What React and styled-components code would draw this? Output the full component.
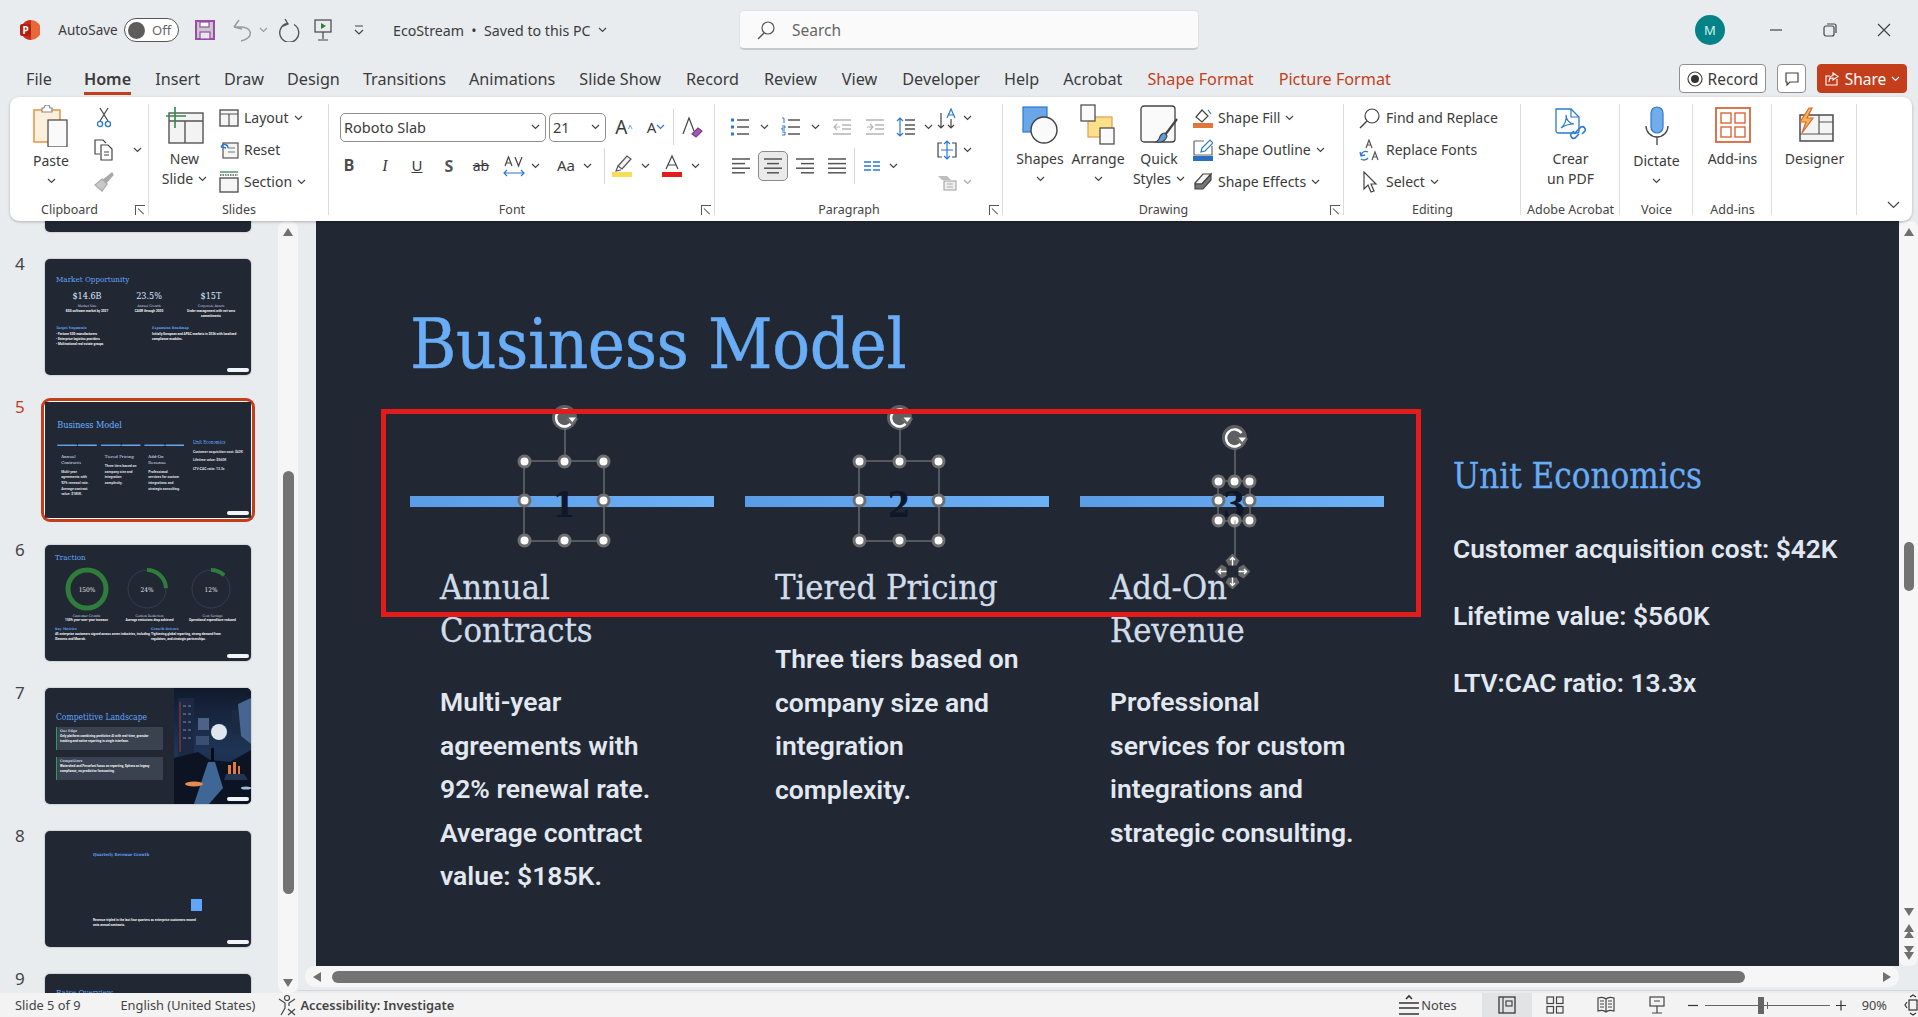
import React from "react";
import styled, { createGlobalStyle } from "styled-components";

const UI = `"Noto Sans", "Open Sans", sans-serif`;
const SLAB = `"DejaVu Serif Condensed", "DejaVu Serif", serif`;
const INK = "#3b3b3b";
const ACCENT = "#c43e1c";
const SLIDE = "#212733";
const BLUE = "#68adf6";

const Global = createGlobalStyle`
  html, body { margin: 0; padding: 0; background: #e9ecef; }
  body { font-family: ${UI}; color: ${INK}; overflow: hidden; }
  * { box-sizing: border-box; }
`;

const Page = styled.div`
  width: 1918px;
  height: 1017px;
  display: flex;
  flex-direction: column;
  background: #e9ecef;
  overflow: hidden;
`;

/* ---------- small drawing helpers ---------- */
const SvgBase = styled.svg`
  display: block;
  flex: none;
`;

const Ic = ({ w = 20, h = 20, children }) => (
  <SvgBase width={w} height={h} viewBox={`0 0 ${w} ${h}`} fill="none" stroke="#444" strokeWidth="1.2">
    {children}
  </SvgBase>
);

const Chev = ({ c = "#444" }) => (
  <SvgBase width="9" height="6" viewBox="0 0 9 6" fill="none" stroke={c} strokeWidth="1.2">
    <path d="M1 1l3.5 3.5L8 1" />
  </SvgBase>
);

const Launcher = styled.span`
  position: absolute;
  right: 4px;
  bottom: 6px;
  width: 10px;
  height: 10px;
  border-left: 1px solid #555;
  border-top: 1px solid #555;
  &::after {
    content: "";
    position: absolute;
    left: 2px;
    top: 2px;
    width: 8px;
    height: 1px;
    background: #555;
    transform: rotate(45deg);
    transform-origin: left;
  }
`;

/* ---------- title bar ---------- */
const TitleBar = styled.div`
  height: 60px;
  display: flex;
  align-items: center;
  padding-left: 20px;
  font-size: 13.5px;
`;

const Cell = styled.div`
  width: ${(p) => (p.$w ? `${p.$w}px` : "auto")};
  margin-left: ${(p) => p.$ml || 0}px;
  flex: none;
  display: flex;
  align-items: center;
  justify-content: ${(p) => p.$j || "center"};
`;

const Toggle = styled.div`
  width: 55px;
  height: 24px;
  border: 1px solid #555;
  border-radius: 12px;
  background: #fff;
  display: flex;
  align-items: center;
  padding-left: 3px;
  gap: 7px;
  font-size: 13px;
  color: #666;
`;

const Knob = styled.span`
  width: 17px;
  height: 17px;
  border-radius: 50%;
  background: #5c5c5c;
`;

const DocName = styled.div`
  margin-left: 29px;
  width: 214px;
  display: flex;
  align-items: center;
  justify-content: space-between;
  font-size: 14.2px;
  white-space: nowrap;
`;

const SearchBox = styled.div`
  margin-left: 132px;
  width: 460px;
  height: 40px;
  background: #fafafa;
  border-radius: 5px;
  border: 1px solid #dfe1e3;
  border-bottom: 2px solid #c5c7ca;
  display: flex;
  align-items: center;
  padding-left: 16px;
  gap: 16px;
  font-size: 15.5px;
  color: #666;
`;

const Avatar = styled.div`
  margin-left: 496px;
  width: 30px;
  height: 30px;
  border-radius: 50%;
  background: #038387;
  color: #d7f0f0;
  font-size: 13px;
  display: flex;
  align-items: center;
  justify-content: center;
`;

const WinBtns = styled.div`
  margin-left: 44px;
  display: flex;
  gap: 40px;
`;

/* ---------- tabs ---------- */
const TabRow = styled.div`
  height: 37px;
  display: flex;
  align-items: flex-start;
  padding: 4px 11px 0 26px;
  position: relative;
`;

const Tab = styled.div`
  height: 31px;
  margin-right: ${(p) => p.$mr}px;
  font-size: 16.2px;
  line-height: 31px;
  white-space: nowrap;
  color: ${(p) => (p.$ctx ? ACCENT : INK)};
  font-weight: ${(p) => (p.$on ? 600 : 400)};
  border-bottom: ${(p) => (p.$on ? `3px solid ${ACCENT}` : "0")};
`;

const TabRight = styled.div`
  margin-left: auto;
  display: flex;
  gap: 11px;
`;

const OutlineBtn = styled.div`
  height: 29px;
  width: ${(p) => p.$w}px;
  background: #fff;
  border: 1px solid #8f8f8f;
  border-radius: 4px;
  display: flex;
  align-items: center;
  justify-content: center;
  gap: 5px;
  font-size: 15.5px;
`;

const ShareBtn = styled(OutlineBtn)`
  background: ${ACCENT};
  border-color: ${ACCENT};
  color: #fff;
`;

/* ---------- ribbon ---------- */
const Ribbon = styled.div`
  height: 124px;
  margin: 0 6px 0 10px;
  background: #fff;
  border-radius: 9px;
  box-shadow: 0 1px 3px rgba(0, 0, 0, 0.25);
  display: flex;
  position: relative;
  z-index: 3;
  font-size: 14px;
`;

const Group = styled.section`
  width: ${(p) => p.$w}px;
  flex: none;
  position: relative;
  &::after {
    content: "";
    position: absolute;
    right: 0;
    top: 7px;
    bottom: 6px;
    width: 1px;
    background: #dcdcdc;
  }
`;

const GroupBody = styled.div`
  height: 104px;
  padding: 4.5px 0 0 ${(p) => p.$pl || 0}px;
  display: flex;
`;

const GroupLabel = styled.div`
  text-align: center;
  font-size: 12.5px;
  line-height: 18px;
  color: #444;
  white-space: nowrap;
  padding-right: ${(p) => (p.$launch ? 20 : 0)}px;
`;

const Big = styled.div`
  width: ${(p) => p.$w}px;
  margin-left: ${(p) => p.$ml || 0}px;
  flex: none;
  display: flex;
  flex-direction: column;
  align-items: center;
  line-height: 20px;
  white-space: nowrap;
`;

const BigIcon = styled.div`
  height: ${(p) => p.$h || 47}px;
  display: flex;
  align-items: center;
`;

const BigLine = styled.div`
  height: 20px;
  display: flex;
  align-items: center;
  gap: 5px;
`;

const Stack = styled.div`
  margin-left: ${(p) => p.$ml || 0}px;
  display: flex;
  flex-direction: column;
  flex: none;
`;

const SmallRow = styled.div`
  height: 32px;
  display: flex;
  align-items: center;
  gap: ${(p) => p.$gap ?? 5}px;
  white-space: nowrap;
`;

const Split = styled.div`
  display: flex;
  align-items: center;
  height: ${(p) => p.$h}px;
  padding-left: ${(p) => p.$pl || 0}px;
`;

const Combo = styled.div`
  width: ${(p) => p.$w}px;
  margin-left: ${(p) => p.$ml || 0}px;
  height: 29px;
  border: 1px solid #8e8e8e;
  border-radius: 5px;
  display: flex;
  align-items: center;
  justify-content: space-between;
  padding: 0 5px 0 3px;
  font-size: 14.5px;
`;

const Sep = styled.span`
  width: 1px;
  height: 36px;
  margin-left: ${(p) => p.$ml || 0}px;
  background: #d6d6d6;
  flex: none;
`;

const Glyph = styled.span`
  font-family: ${(p) => p.$font || UI};
  font-size: ${(p) => p.$s || 15}px;
  font-weight: ${(p) => p.$b || 400};
  font-style: ${(p) => (p.$i ? "italic" : "normal")};
  text-decoration: ${(p) => p.$d || "none"};
  color: ${(p) => p.$c || INK};
  line-height: 1;
`;

const Pressed = styled.div`
  width: 30px;
  height: 30px;
  margin-left: 7px;
  flex: none;
  border: 1px solid #8a8a8a;
  border-radius: 5px;
  background: #eaeaea;
  display: flex;
  align-items: center;
  justify-content: center;
`;

const CollapseBtn = styled.div`
  position: absolute;
  right: 12px;
  bottom: 12px;
`;

/* lines icon used by paragraph buttons */
const Lines = ({ rows, c = "#555" }) => (
  <Ic w={20} h={20}>
    {rows.map(([x1, x2], i) => (
      <path key={i} d={`M${x1} ${3 + i * 4.6}H${x2}`} stroke={c} strokeWidth="1.5" />
    ))}
  </Ic>
);

/* ---------- workspace ---------- */
const Workspace = styled.div`
  height: 772px;
  display: flex;
  overflow: hidden;
`;

const Sidebar = styled.div`
  width: 278px;
  flex: none;
  overflow: hidden;
  display: flex;
  flex-direction: column;
  gap: 27px;
`;

const ThumbRow = styled.div`
  display: flex;
  flex: none;
  padding-left: 15px;
`;

const ThumbNo = styled.div`
  width: 30px;
  font-size: 17px;
  line-height: 22px;
  margin-top: -6px;
  color: ${(p) => (p.$on ? ACCENT : "#444")};
`;

const Thumb = styled.div`
  width: 206px;
  height: ${(p) => p.$h || 116}px;
  background: ${SLIDE};
  border-radius: ${(p) => p.$r || "5px"};
  position: relative;
  overflow: ${(p) => (p.$on ? "visible" : "hidden")};
  flex: none;
  color: #dfe6ee;
  box-shadow: ${(p) =>
    p.$on ? `0 0 0 1px #fff, 0 0 0 4px ${ACCENT}` : "0 0 2px rgba(0,0,0,.35)"};
`;

const Badge = styled.span`
  position: absolute;
  right: 2px;
  bottom: 3px;
  width: 22px;
  height: 4px;
  border-radius: 2px;
  background: #f2f5f8;
`;

const MiniTitle = styled.div`
  font-family: ${SLAB};
  font-size: ${(p) => p.$s || 8}px;
  line-height: 1.2;
  color: #60a5fa;
  white-space: nowrap;
`;

const MiniPad = styled.div`
  padding: ${(p) => p.$p};
  height: 100%;
  overflow: hidden;
`;

const MiniStats = styled.div`
  display: grid;
  grid-template-columns: 62px 62px 62px;
  margin-top: 6px;
  text-align: center;
`;

const MiniBig = styled.div`
  font-family: ${SLAB};
  font-size: 9px;
  color: #dbeafe;
`;

const MiniCap = styled.div`
  font-family: ${SLAB};
  font-size: 3.4px;
  color: #cbd5e1;
  margin-top: ${(p) => p.$mt || 3}px;
`;

const MiniText = styled.div`
  font-family: Roboto, sans-serif;
  font-weight: 700;
  font-size: 3.2px;
  line-height: 5px;
  color: #f1f5f9;
  margin-top: ${(p) => p.$mt || 0}px;
`;

const MiniHead = styled.div`
  font-family: ${SLAB};
  font-size: ${(p) => p.$s || 3.6}px;
  font-weight: 700;
  line-height: 5px;
  color: ${(p) => p.$c || "#60a5fa"};
`;

const MiniCols = styled.div`
  display: grid;
  grid-template-columns: ${(p) => p.$c || "96px 86px"};
  margin-top: ${(p) => p.$mt || 0}px;
`;

const DonutRow = styled.div`
  display: grid;
  grid-template-columns: 63px 63px 63px;
  margin-top: 4px;
  text-align: center;
  justify-items: center;
`;

const EdgeBox = styled.div`
  margin-top: ${(p) => p.$mt}px;
  width: 107px;
  height: 23px;
  background: #3a424f;
  border-left: 1px solid #2e9e4f;
  padding: 2px 3px;
`;

const ThumbArt = styled.div`
  position: absolute;
  right: 0;
  top: 0;
  bottom: 0;
  width: 77px;
`;

const ChartBlock = styled.div`
  margin: 42px 0 0 98px;
  width: 11px;
  height: 12px;
  background: #60a5fa;
`;

const ChartNote = styled(MiniText)`
  margin-top: 7px;
  width: 108px;
`;

const ChartWrap = styled.div`
  padding-left: 48px;
  padding-top: 21px;
`;

const Scaled = styled.div`
  width: 1583px;
  height: 890px;
  transform: scale(0.1301);
  transform-origin: 0 0;
`;

/* vertical scroll strip */
const VScroll = styled.div`
  width: ${(p) => p.$w}px;
  flex: none;
  background: #f6f6f6;
  border-radius: 8px;
  display: flex;
  flex-direction: column;
  align-items: center;
  padding: 6px 0 5px;
`;

const VThumb = styled.div`
  width: ${(p) => p.$tw}px;
  height: ${(p) => p.$h}px;
  margin-top: ${(p) => p.$mt}px;
  margin-bottom: auto;
  background: #737373;
  border-radius: 6px;
`;

const ArrowStack = styled.div`
  display: flex;
  flex-direction: column;
  align-items: center;
  gap: 6px;
`;

const Arrow = ({ dir = "up", dbl }) => {
  const t = { up: 0, right: 90, down: 180, left: 270 }[dir];
  return (
    <SvgBase width="12" height={dbl ? 16 : 10} viewBox={dbl ? "0 0 12 16" : "0 0 12 10"} style={{ transform: `rotate(${t}deg)` }} fill="#707070">
      <path d="M6 1l5 8H1z" />
      {dbl && <path d="M6 8l5 7H1z" />}
    </SvgBase>
  );
};

const Center = styled.div`
  flex: 1;
  display: flex;
  flex-direction: column;
  min-width: 0;
`;

const CanvasRow = styled.div`
  height: 745px;
  display: flex;
  padding-left: 18px;
`;

const Viewport = styled.div`
  width: 1583px;
  height: 745px;
  overflow: hidden;
  position: relative;
`;

const ViewportInner = styled.div`
  margin-top: -52px;
`;

const HScroll = styled.div`
  margin-left: 7px;
  width: 1594px;
  height: 21px;
  background: #f6f6f6;
  border-radius: 10px;
  display: flex;
  align-items: center;
  padding: 0 6px;
`;

const HThumb = styled.div`
  width: 1413px;
  height: 12px;
  margin-left: 9px;
  margin-right: auto;
  background: #737373;
  border-radius: 6px;
`;

const HRule = styled.div`
  margin-top: 3px;
  height: 1px;
  background: #d4d6d9;
`;

/* ---------- the slide ---------- */
const SlideFrame = styled.div`
  width: 1583px;
  height: 890px;
  background: ${SLIDE};
  position: relative;
  padding: 123px 0 0 94px;
`;

const SlideTitle = styled.h1`
  margin: 0;
  height: 104px;
  font-family: ${SLAB};
  font-weight: 400;
  font-size: 70px;
  line-height: 104px;
  letter-spacing: -0.4px;
  -webkit-text-stroke: 0.5px ${BLUE};
  color: ${BLUE};
`;

const Columns = styled.div`
  margin-top: 59px;
  display: flex;
  gap: 31px;
`;

const PlanCol = styled.div`
  width: 304px;
  flex: none;
  padding-top: 41px;
`;

const Bar = styled.div`
  height: 11px;
  position: relative;
  background: linear-gradient(90deg, #5a9ce6, #6cb0f6);
`;

const Digit = styled.span`
  position: absolute;
  left: calc(50% + 2px);
  top: 50%;
  transform: translate(-50%, -44%);
  font-family: ${SLAB};
  font-weight: 700;
  font-size: 36px;
  line-height: 1;
  color: #0f172a;
`;

const PlanHead = styled.h3`
  margin: 59px 0 0;
  padding-left: 30px;
  width: 290px;
  font-family: ${SLAB};
  font-weight: 400;
  font-size: 34.2px;
  line-height: 43px;
  -webkit-text-stroke: 0.3px #d0dde9;
  color: #d0dde9;
`;

const PlanText = styled.p`
  margin: 28px 0 0;
  padding-left: 30px;
  width: 282px;
  font-family: Roboto, sans-serif;
  font-weight: 600;
  font-size: 26.5px;
  line-height: 43.6px;
  color: #e2e8f0;
`;

const EconCol = styled.div`
  margin-left: 38px;
  flex: none;
`;

const EconHead = styled.h2`
  margin: 0;
  font-family: ${SLAB};
  font-weight: 400;
  font-size: 34.6px;
  line-height: 42px;
  -webkit-text-stroke: 0.3px ${BLUE};
  color: ${BLUE};
`;

const EconItem = styled.div`
  margin-top: ${(p) => p.$mt}px;
  font-family: Roboto, sans-serif;
  font-weight: 600;
  font-size: 26.3px;
  line-height: 40px;
  color: #e2e8f0;
  white-space: nowrap;
`;

/* selection overlay on the number shapes */
const SelBox = styled.div`
  position: absolute;
  left: calc(50% + 2px);
  top: calc(50% - 1px);
  width: ${(p) => p.$w}px;
  height: ${(p) => p.$h}px;
  transform: translate(-50%, -50%);
  border: 1px solid #8a8a8a;
`;

const Handle = styled.span`
  position: absolute;
  left: ${(p) => p.$x}%;
  top: ${(p) => p.$y}%;
  width: 14px;
  height: 14px;
  margin: -7px 0 0 -7px;
  border-radius: 50%;
  background: #fff;
  border: 3px solid #6e6e6e;
`;

const Stem = styled.span`
  position: absolute;
  left: 50%;
  width: 1px;
  background: #8a8a8a;
  ${(p) => (p.$down ? `top: 100%; height: 36px;` : `bottom: 100%; height: 34px;`)}
`;

const RotateMark = styled.span`
  position: absolute;
  left: 50%;
  bottom: 100%;
  margin: 0 0 30px -13px;
`;

const MoveMark = styled.span`
  position: absolute;
  left: 50%;
  top: 100%;
  margin: 33px 0 0 -20px;
`;

const Callout = styled.div`
  position: absolute;
  left: 65px;
  top: 240px;
  width: 1040px;
  height: 208px;
  border: 5px solid #e31b1b;
  pointer-events: none;
`;

const Rotate = () => (
  <SvgBase width="32" height="28" viewBox="0 0 32 28" fill="none">
    <circle cx="13" cy="14" r="12.500" fill="#6e6e6e" opacity=".8" />
    <path d="M20 9.500a8.500 8.500 0 1 0 1 8" stroke="#fff" strokeWidth="2.4" />
    <path d="M14 15h13l-6.500 7z" fill="#6e6e6e" />
    <path d="M17 14h7.500l-3.700 4.500z" fill="#fff" />
  </SvgBase>
);

const Move = () => (
  <SvgBase width="36" height="36" viewBox="0 0 36 36">
    <path d="M18 0l7 7-3 5h-8l-3-5zM18 36l7-7-3-5h-8l-3 5zM0 18l7-7 5 3v8l-5 3zM36 18l-7-7-5 3v8l5 3z" fill="#686868" />
    <path d="M18 4v8M15.500 6.500L18 4l2.500 2.500M18 32v-8M15.500 29.500L18 32l2.500-2.500M4 18h8M6.500 15.500L4 18l2.500 2.500M32 18h-8M29.500 15.500L32 18l-2.500 2.500" stroke="#fff" strokeWidth="1.4" fill="none" />
  </SvgBase>
);

const Selection = ({ w, h, n, extra }) => (
  <>
    <Digit>{n}</Digit>
    <SelBox $w={w} $h={h}>
      <Stem />
      <RotateMark>
        <Rotate />
      </RotateMark>
      {[0, 50, 100].map((y) =>
        [0, 50, 100].map((x) =>
          x === 50 && y === 50 ? null : <Handle key={`${x}-${y}`} $x={x} $y={y} />
        )
      )}
      {extra && (
        <>
          <Stem $down />
          <MoveMark>
            <Move />
          </MoveMark>
        </>
      )}
    </SelBox>
  </>
);

const plans = [
  {
    n: 1,
    w: 81,
    h: 81,
    head: "Annual Contracts",
    text: "Multi-year agreements with 92% renewal rate. Average contract value: $185K.",
  },
  {
    n: 2,
    w: 81,
    h: 81,
    head: "Tiered Pricing",
    text: "Three tiers based on company size and integration complexity.",
  },
  {
    n: 3,
    w: 33,
    h: 41,
    extra: true,
    head: "Add-On Revenue",
    text: "Professional services for custom integrations and strategic consulting.",
  },
];

const BusinessSlide = ({ selected }) => (
  <SlideFrame>
    <SlideTitle>Business Model</SlideTitle>
    <Columns>
      {plans.map((p) => (
        <PlanCol key={p.n}>
          <Bar>
            {selected ? <Selection {...p} /> : <Digit>{p.n}</Digit>}
          </Bar>
          <PlanHead>{p.head}</PlanHead>
          <PlanText>{p.text}</PlanText>
        </PlanCol>
      ))}
      <EconCol>
        <EconHead>Unit Economics</EconHead>
        <EconItem $mt={32}>Customer acquisition cost: $42K</EconItem>
        <EconItem $mt={27}>Lifetime value: $560K</EconItem>
        <EconItem $mt={27}>LTV:CAC ratio: 13.3x</EconItem>
      </EconCol>
    </Columns>
    {selected && <Callout />}
  </SlideFrame>
);

/* ---------- thumbnails ---------- */
const Donut = ({ pct, thick, label }) => {
  const r = 19;
  const c = 2 * Math.PI * r;
  return (
    <SvgBase width="44" height="44" viewBox="0 0 44 44" fill="none">
      <circle cx="22" cy="22" r={r} stroke="#3a4454" strokeWidth="0.8" />
      <circle
        cx="22"
        cy="22"
        r={r}
        stroke="#2e7d3a"
        strokeWidth={thick}
        strokeDasharray={`${(c * pct) / 100} ${c}`}
        transform="rotate(-90 22 22)"
      />
      <text x="22" y="24.5" textAnchor="middle" fontSize="6.5" fill="#e2e8f0" fontFamily="DejaVu Serif Condensed, serif">
        {label}
      </text>
    </SvgBase>
  );
};

const CityArt = () => (
  <SvgBase width="77" height="116" viewBox="0 0 77 116">
    <defs>
      <linearGradient id="sky" x1="0" y1="0" x2="0" y2="1">
        <stop offset="0" stopColor="#111a2c" />
        <stop offset="0.55" stopColor="#1f3557" />
        <stop offset="1" stopColor="#0d1524" />
      </linearGradient>
    </defs>
    <rect width="77" height="116" fill="url(#sky)" />
    <path d="M4 10h16v62H4zM58 22h10v24H58z" fill="#1c2942" />
    <path d="M6 14v50" stroke="#a33a3a" strokeWidth="1" />
    <path d="M9 18h3M14 18h3M9 26h3M14 26h3M9 34h3M14 34h3M9 42h3M14 42h3M9 50h3M14 50h3" stroke="#7a8ba8" strokeWidth="1.2" />
    <path d="M64 16l13-6v46l-10-8z" fill="#47658e" />
    <circle cx="45" cy="44" r="8" fill="#dfe6ee" />
    <rect x="24" y="30" width="11" height="12" fill="#4c6286" />
    <rect x="22" y="48" width="13" height="9" fill="#3b4f73" />
    <path d="M0 70l24-6 12 8 20 2 21-12v54H0z" fill="#0c1424" />
    <path d="M34 74h7l8 26-14 16H20z" fill="#3f6796" />
    <path d="M37 60h3v13h-3z" fill="#070b14" />
    <path d="M54 86h3v-9h-3zM59 86h3V74h-3zM64 86h2v-8h-2z" fill="#e2793f" />
    <path d="M52 86h18l4 6H50z" fill="#223654" />
    <ellipse cx="20" cy="96" rx="9" ry="2.500" fill="#e98a4e" />
    <ellipse cx="72" cy="100" rx="5" ry="1.500" fill="#9cc1e0" />
  </SvgBase>
);

const T4 = () => (
  <MiniPad $p="16px 11px">
    <MiniTitle>Market Opportunity</MiniTitle>
    <MiniStats>
      <div>
        <MiniBig>$14.6B</MiniBig>
        <MiniCap>Market Size</MiniCap>
        <MiniText $mt={1}>ESG software market by 2027</MiniText>
      </div>
      <div>
        <MiniBig>23.5%</MiniBig>
        <MiniCap>Annual Growth</MiniCap>
        <MiniText $mt={1}>CAGR through 2030</MiniText>
      </div>
      <div>
        <MiniBig>$15T</MiniBig>
        <MiniCap>Corporate Assets</MiniCap>
        <MiniText $mt={1}>Under management with net-zero commitments</MiniText>
      </div>
    </MiniStats>
    <MiniCols $mt={7}>
      <div>
        <MiniHead>Target Segments</MiniHead>
        <MiniText $mt={1}>• Fortune 500 manufacturers</MiniText>
        <MiniText>• Enterprise logistics providers</MiniText>
        <MiniText>• Multinational real estate groups</MiniText>
      </div>
      <div>
        <MiniHead>Expansion Roadmap</MiniHead>
        <MiniText $mt={1}>Initially European and APAC markets in 2026 with localized compliance modules.</MiniText>
      </div>
    </MiniCols>
  </MiniPad>
);

const T6 = () => (
  <MiniPad $p="8px 10px">
    <MiniTitle>Traction</MiniTitle>
    <DonutRow>
      <div>
        <Donut pct={100} thick={5} label="150%" />
        <MiniCap>Customer Growth</MiniCap>
        <MiniText>150% year-over-year increase</MiniText>
      </div>
      <div>
        <Donut pct={24} thick={4} label="24%" />
        <MiniCap>Carbon Reduction</MiniCap>
        <MiniText>Average emissions drop achieved</MiniText>
      </div>
      <div>
        <Donut pct={12} thick={4} label="12%" />
        <MiniCap>Cost Savings</MiniCap>
        <MiniText>Operational expenditure reduced</MiniText>
      </div>
    </DonutRow>
    <MiniCols $mt={4}>
      <div>
        <MiniHead>Key Metrics</MiniHead>
        <MiniText>45 enterprise customers signed across seven industries, including Siemens and Maersk.</MiniText>
      </div>
      <div>
        <MiniHead>Growth Drivers</MiniHead>
        <MiniText>Tightening global reporting, strong demand from regulators, and strategic partnerships.</MiniText>
      </div>
    </MiniCols>
  </MiniPad>
);

const T7 = () => (
  <>
    <MiniPad $p="24px 11px">
      <MiniTitle $s={8.5}>Competitive Landscape</MiniTitle>
      <EdgeBox $mt={5}>
        <MiniHead $c="#cbd5e1">Our Edge</MiniHead>
        <MiniText>Only platform combining predictive AI with real-time, granular tracking and native reporting in single interface.</MiniText>
      </EdgeBox>
      <EdgeBox $mt={7}>
        <MiniHead $c="#cbd5e1">Competitors</MiniHead>
        <MiniText>Watershed and Persefoni focus on reporting, Sphera on legacy compliance, no predictive forecasting.</MiniText>
      </EdgeBox>
    </MiniPad>
    <ThumbArt>
      <CityArt />
    </ThumbArt>
  </>
);

const T8 = () => (
  <ChartWrap>
    <MiniHead $s={4.2}>Quarterly Revenue Growth</MiniHead>
    <ChartBlock />
    <ChartNote>Revenue tripled in the last four quarters as enterprise customers moved onto annual contracts.</ChartNote>
  </ChartWrap>
);

const T9 = () => (
  <MiniPad $p="14px 11px">
    <MiniTitle>Raise Overview</MiniTitle>
  </MiniPad>
);

const slides = [
  { no: 4, body: <T4 /> },
  { no: 5, on: true, body: <Scaled><BusinessSlide /></Scaled> },
  { no: 6, body: <T6 /> },
  { no: 7, body: <T7 /> },
  { no: 8, body: <T8 /> },
];

const tabs = [
  ["Insert", 24],
  ["Draw", 23],
  ["Design", 23],
  ["Transitions", 23],
  ["Animations", 24],
  ["Slide Show", 25],
  ["Record", 25],
  ["Review", 25],
  ["View", 25],
  ["Developer", 24],
  ["Help", 24],
  ["Acrobat", 25],
];

/* ---------- status bar ---------- */
const StatusBar = styled.div`
  height: 24px;
  background: #f3f3f3;
  display: flex;
  align-items: center;
  padding-left: 15px;
  font-size: 12.8px;
  color: #444;
  position: relative;
  z-index: 2;
`;

const StatusText = styled.span`
  margin-left: ${(p) => p.$ml || 0}px;
  font-weight: ${(p) => p.$b || 400};
  white-space: nowrap;
  flex: none;
`;

const ViewBtn = styled.div`
  margin-left: ${(p) => p.$ml}px;
  width: ${(p) => p.$w || 18}px;
  height: 24px;
  flex: none;
  display: flex;
  align-items: center;
  justify-content: center;
  background: ${(p) => (p.$on ? "#e1e3e5" : "transparent")};
`;

const ZoomTrack = styled.div`
  margin-left: 6px;
  width: 125px;
  height: 1px;
  background: #666;
  position: relative;
  flex: none;
`;

const ZoomThumb = styled.span`
  position: absolute;
  left: 53px;
  top: -8px;
  width: 6px;
  height: 17px;
  background: #666;
`;

const ZoomTick = styled.span`
  position: absolute;
  left: 62px;
  top: -3px;
  width: 1px;
  height: 7px;
  background: #666;
`;

export default function App() {
  return (
    <Page>
      <Global />
      <TitleBar>
        <SvgBase width="20" height="24" viewBox="0 0 20 24">
          <circle cx="11" cy="12" r="10" fill="#e8683a" />
          <path d="M11 2a10 10 0 0 0-9 6v8a10 10 0 0 0 9 6z" fill="#c92c1c" />
          <rect x="0" y="6" width="11" height="12" rx="2" fill="#b3200f" />
          <text x="5.5" y="16" textAnchor="middle" fontSize="10" fontWeight="700" fill="#fff" fontFamily="Noto Sans, sans-serif">P</text>
        </SvgBase>
        <Cell $ml={21} $w={54}>AutoSave</Cell>
        <Cell $ml={9}>
          <Toggle>
            <Knob />
            Off
          </Toggle>
        </Cell>
        <Cell $ml={16}>
          <Ic w={20} h={20}>
            <rect x="1" y="1" width="18" height="18" fill="#c8c8cc" stroke="#9a4aa8" strokeWidth="2" />
            <rect x="5" y="2" width="9" height="5" fill="#fff" stroke="#9a4aa8" />
            <rect x="5" y="12" width="10" height="7" fill="#e8e8ea" stroke="#9a4aa8" />
          </Ic>
        </Cell>
        <Cell $ml={17}>
          <Ic w={22} h={24}>
            <path d="M2 9l5-7M2 9l8 2M2.5 9H9c12 0 13 11 0 14" stroke="#9a9a9a" strokeWidth="1.5" />
          </Ic>
        </Cell>
        <Cell $ml={5}>
          <Chev c="#9a9a9a" />
        </Cell>
        <Cell $ml={10}>
          <Ic w={22} h={24}>
            <path d="M7 1l3 5-5 2M9 5.5A9.5 9.5 0 1 0 16 6.5" stroke="#555" strokeWidth="1.4" />
          </Ic>
        </Cell>
        <Cell $ml={13}>
          <Ic w={20} h={24}>
            <rect x="2" y="2" width="16" height="12" />
            <path d="M8 5l5 3-5 3z" fill="#2f7d3b" stroke="none" />
            <path d="M10 14v7M5 22h10" />
          </Ic>
        </Cell>
        <Cell $ml={21}>
          <Ic w={10} h={12}>
            <path d="M1 2h8M1 6l4 4 4-4" />
          </Ic>
        </Cell>
        <DocName>
          EcoStream&nbsp;&nbsp;•&nbsp;&nbsp;Saved to this PC
          <Chev />
        </DocName>
        <SearchBox>
          <Ic w={20} h={20}>
            <circle cx="12" cy="8" r="6" stroke="#555" />
            <path d="M8 13l-6 6" stroke="#555" strokeWidth="1.4" />
          </Ic>
          Search
        </SearchBox>
        <Avatar>M</Avatar>
        <WinBtns>
          <Ic w={14} h={14}>
            <path d="M1 7h12" />
          </Ic>
          <Ic w={14} h={14}>
            <rect x="1" y="3" width="10" height="10" rx="2" />
            <path d="M4 1h7a2 2 0 0 1 2 2v7" />
          </Ic>
          <Ic w={14} h={14}>
            <path d="M1 1l12 12M13 1L1 13" />
          </Ic>
        </WinBtns>
      </TitleBar>

      <TabRow>
        <Tab $mr={32}>File</Tab>
        <Tab $on $mr={24}>Home</Tab>
        {tabs.map(([t, mr]) => (
          <Tab key={t} $mr={mr}>{t}</Tab>
        ))}
        <Tab $ctx $mr={25}>Shape Format</Tab>
        <Tab $ctx $mr={0}>Picture Format</Tab>
        <TabRight>
          <OutlineBtn $w={87}>
            <Ic w={16} h={16}>
              <circle cx="8" cy="8" r="7" />
              <circle cx="8" cy="8" r="4" fill="#333" stroke="none" />
            </Ic>
            Record
          </OutlineBtn>
          <OutlineBtn $w={29}>
            <Ic w={16} h={16}>
              <path d="M2 2h12v9H6l-3 3v-3H2z" />
            </Ic>
          </OutlineBtn>
          <ShareBtn $w={90}>
            <SvgBase width="16" height="16" viewBox="0 0 16 16" fill="none" stroke="#fff" strokeWidth="1.1">
              <path d="M13 8v6H2V5h4M9 2l5 3.5L9 9V7C6 7 5 9 5 11c0-4 1-6 4-6.500z" />
            </SvgBase>
            Share
            <Chev c="#fff" />
          </ShareBtn>
        </TabRight>
      </TabRow>

      <Ribbon>
        <Group $w={139}>
          <GroupBody>
            <Big $w={82}>
              <BigIcon $h={49}>
                <Ic w={36} h={42}>
                  <rect x="1" y="5" width="26" height="32" fill="#fbf0dc" stroke="#e59a4f" strokeWidth="1.6" />
                  <path d="M9 7V3h2a3 3 0 0 1 6 0h2v4z" fill="#fff" stroke="#888" />
                  <rect x="15" y="15" width="19" height="27" fill="#fafafa" stroke="#444" />
                </Ic>
              </BigIcon>
              <BigLine>Paste</BigLine>
              <BigLine><Chev /></BigLine>
            </Big>
            <Stack>
              <SmallRow>
                <Cell $w={24}>
                  <Ic w={14} h={22}>
                    <path d="M3 1l8 13M11 1L3 14" stroke="#444" />
                    <circle cx="3" cy="17" r="2.6" stroke="#2b79d0" strokeWidth="1.4" />
                    <circle cx="11" cy="17" r="2.6" stroke="#2b79d0" strokeWidth="1.4" />
                  </Ic>
                </Cell>
              </SmallRow>
              <SmallRow>
                <Cell $w={24}>
                  <Ic w={22} h={22}>
                    <path d="M7 15H2V1h8l3 3" />
                    <path d="M8 6h7l4 4v11H8z" fill="#fff" />
                    <path d="M11 13h5M11 16h5" />
                  </Ic>
                </Cell>
                <Cell $ml={12}><Chev /></Cell>
              </SmallRow>
              <SmallRow>
                <Cell $w={24}>
                  <Ic w={20} h={20}>
                    <path d="M18 1l1 2-7 8-3-3z" fill="#a9a9a9" stroke="#a9a9a9" />
                    <path d="M8 7l5 5-5 7-7-6z" fill="#c9c9c9" stroke="#a9a9a9" />
                  </Ic>
                </Cell>
              </SmallRow>
            </Stack>
          </GroupBody>
          <GroupLabel $launch>Clipboard</GroupLabel>
          <Launcher />
        </Group>

        <Group $w={180}>
          <GroupBody $pl={1}>
            <Big $w={69}>
              <BigIcon>
                <Ic w={38} h={38}>
                  <rect x="3" y="7" width="34" height="30" fill="#f3f3f3" stroke="#555" strokeWidth="1.4" />
                  <path d="M3 15h34M19 15v22" stroke="#555" strokeWidth="1.4" />
                  <path d="M9 1v21M0 10h20" stroke="#2f8a4c" strokeWidth="1.6" />
                </Ic>
              </BigIcon>
              <BigLine>New</BigLine>
              <BigLine>Slide <Chev /></BigLine>
            </Big>
            <Stack>
              <SmallRow>
                <Ic w={20} h={20}>
                  <rect x="1" y="2" width="18" height="16" fill="#f5f5f5" stroke="#555" strokeWidth="1.4" />
                  <path d="M1 6h18M10 6v12" stroke="#555" />
                </Ic>
                Layout <Chev />
              </SmallRow>
              <SmallRow>
                <Ic w={20} h={20}>
                  <rect x="4" y="3" width="15" height="15" fill="#f5f5f5" stroke="#555" />
                  <path d="M9 8h7M9 12h7" stroke="#777" />
                  <path d="M2 7l3-4M2 7l5 1M2 7c2-4 7-3 7 1" stroke="#2b79d0" strokeWidth="1.3" />
                </Ic>
                Reset
              </SmallRow>
              <SmallRow>
                <Ic w={20} h={24}>
                  <path d="M1 2h18" stroke="#2f8a4c" strokeWidth="1.3" />
                  <path d="M1 5h18" stroke="#555" strokeWidth="1.4" strokeDasharray="1.500 1" />
                  <rect x="1" y="8" width="18" height="14" fill="#f5f5f5" stroke="#555" strokeWidth="1.4" />
                </Ic>
                Section <Chev />
              </SmallRow>
            </Stack>
          </GroupBody>
          <GroupLabel>Slides</GroupLabel>
        </Group>

        <Group $w={386}>
          <GroupBody $pl={8}>
            <Stack>
              <Split $h={51}>
                <Combo $w={206} $ml={3}>
                  Roboto Slab
                  <Chev />
                </Combo>
                <Combo $w={57} $ml={3}>
                  21
                  <Chev />
                </Combo>
                <Cell $w={24} $ml={6}>
                  <Glyph $s={19}>A</Glyph>
                  <Glyph $s={9} $c="#2b79d0">^</Glyph>
                </Cell>
                <Cell $w={22} $ml={9}>
                  <Glyph $s={15}>A</Glyph>
                  <Chev c="#2b79d0" />
                </Cell>
                <Sep $ml={6} />
                <Cell $w={24} $ml={6}>
                  <Ic w={22} h={22}>
                    <path d="M2 18L8 2l5 13" stroke="#444" />
                    <path d="M11 18l6-6 4 3-6 6z" fill="#a15ab0" stroke="#7d3f8c" />
                  </Ic>
                </Cell>
              </Split>
              <Split $h={26}>
                <Cell $w={24}><Glyph $s={16} $b={700} $font="Roboto, sans-serif" $c="#4a4a4a">B</Glyph></Cell>
                <Cell $w={24} $ml={12}><Glyph $s={16} $i $font="Liberation Serif, serif">I</Glyph></Cell>
                <Cell $w={24} $ml={8}><Glyph $s={15} $d="underline">U</Glyph></Cell>
                <Cell $w={24} $ml={8}><Glyph $s={16} $b={700} $c="#555">S</Glyph></Cell>
                <Cell $w={24} $ml={8}><Glyph $s={14} $d="line-through">ab</Glyph></Cell>
                <Cell $w={24} $ml={9}>
                  <Ic w={22} h={22}>
                    <path d="M2 11l3.500-9L9 11M3.500 8h4M12 2l3.500 9L19 2" stroke="#444" />
                    <path d="M1 18h20M4 15l-3 3 3 3M18 15l3 3-3 3" stroke="#2b79d0" />
                  </Ic>
                </Cell>
                <Cell $w={10} $ml={4}><Chev /></Cell>
                <Cell $w={24} $ml={14}><Glyph $s={15}>Aa</Glyph></Cell>
                <Cell $w={10} $ml={4}><Chev /></Cell>
                <Sep $ml={12} />
                <Cell $w={24} $ml={5}>
                  <Ic w={22} h={24}>
                    <path d="M7 12l9-10 4 3-9 10z" fill="#f4f4f4" stroke="#555" />
                    <path d="M7 12l-2 5 5-1" stroke="#555" />
                    <rect x="1" y="18" width="20" height="5" fill="#f7dd5a" stroke="none" />
                  </Ic>
                </Cell>
                <Cell $w={10} $ml={6}><Chev /></Cell>
                <Cell $w={24} $ml={10}>
                  <Ic w={20} h={24}>
                    <path d="M4 15L10 2l6 13M6 11h8" stroke="#444" />
                    <rect x="0" y="18" width="20" height="5" fill="#e51c1c" stroke="none" />
                  </Ic>
                </Cell>
                <Cell $w={10} $ml={6}><Chev /></Cell>
              </Split>
            </Stack>
          </GroupBody>
          <GroupLabel $launch>Font</GroupLabel>
          <Launcher />
        </Group>

        <Group $w={288}>
          <GroupBody $pl={15}>
            <Stack>
              <Split $h={51}>
                <Cell $w={20}>
                  <Ic w={20} h={20}>
                    <path d="M1 3h3M1 10h3M1 17h3" stroke="#2b79d0" strokeWidth="3" />
                    <path d="M7 3h12M7 10h12M7 17h12" stroke="#555" strokeWidth="1.4" />
                  </Ic>
                </Cell>
                <Cell $w={10} $ml={9}><Chev /></Cell>
                <Cell $w={20} $ml={12}>
                  <Ic w={20} h={20}>
                    <path d="M1 1h2v5M1 9h3v2H1v2h3M1 15h3v3H1" stroke="#2b79d0" strokeWidth="1" />
                    <path d="M7 3h12M7 10h12M7 17h12" stroke="#555" strokeWidth="1.4" />
                  </Ic>
                </Cell>
                <Cell $w={10} $ml={9}><Chev /></Cell>
                <Cell $w={20} $ml={12}>
                  <Ic w={20} h={20}>
                    <path d="M1 3h18M10 8h9M10 12h9M1 17h18" stroke="#b5b5b5" strokeWidth="1.4" />
                    <path d="M8 10H2M5 7l-3 3 3 3" stroke="#b5b5b5" />
                  </Ic>
                </Cell>
                <Cell $w={20} $ml={13}>
                  <Ic w={20} h={20}>
                    <path d="M1 3h18M10 8h9M10 12h9M1 17h18" stroke="#b5b5b5" strokeWidth="1.4" />
                    <path d="M2 10h6M5 7l3 3-3 3" stroke="#b5b5b5" />
                  </Ic>
                </Cell>
                <Cell $w={20} $ml={11}>
                  <Ic w={20} h={20}>
                    <path d="M4 1v18M1 4l3-3 3 3M1 16l3 3 3-3" stroke="#2b79d0" />
                    <path d="M9 3h10M9 8h10M9 12h10M9 17h10" stroke="#555" strokeWidth="1.4" />
                  </Ic>
                </Cell>
                <Cell $w={10} $ml={7}><Chev /></Cell>
              </Split>
              <Split $h={26}>
                <Cell $w={20} $ml={1}><Lines rows={[[1, 19], [1, 14], [1, 19], [1, 14]]} /></Cell>
                <Pressed><Lines rows={[[1, 19], [4, 16], [1, 19], [4, 16]]} /></Pressed>
                <Cell $w={20} $ml={7}><Lines rows={[[1, 19], [6, 19], [1, 19], [6, 19]]} /></Cell>
                <Cell $w={20} $ml={12}><Lines rows={[[1, 19], [1, 19], [1, 19], [1, 19]]} /></Cell>
                <Sep $ml={7} />
                <Cell $w={20} $ml={7}>
                  <Ic w={20} h={20}>
                    <path d="M2 6h7M11 6h7M2 10h7M11 10h7M2 14h7M11 14h7" stroke="#2b79d0" strokeWidth="1.4" />
                  </Ic>
                </Cell>
                <Cell $w={10} $ml={6}><Chev /></Cell>
              </Split>
            </Stack>
            <Stack $ml={4}>
              <SmallRow $gap={6}>
                <Ic w={20} h={22}>
                  <path d="M4 6v15M1 18l3 3 3-3M14 12v9M11 18l3 3 3-3" stroke="#444" />
                  <path d="M10 11l4-9 4 9M11.500 8h5" stroke="#2b79d0" />
                </Ic>
                <Chev />
              </SmallRow>
              <SmallRow $gap={6}>
                <Ic w={20} h={20}>
                  <path d="M5 3H1v14h4M15 3h4v14h-4" stroke="#444" />
                  <path d="M10 1v18M7 4l3-3 3 3M7 16l3 3 3-3M4 10h12" stroke="#2b79d0" />
                </Ic>
                <Chev />
              </SmallRow>
              <SmallRow $gap={6}>
                <Ic w={20} h={20}>
                  <path d="M1 4h9l4 4H5z" fill="#bdbdbd" stroke="none" />
                  <rect x="7" y="9" width="12" height="9" fill="#eee" stroke="#aaa" />
                  <path d="M10 12h6M10 15h6" stroke="#aaa" />
                </Ic>
                <Chev c="#aaa" />
              </SmallRow>
            </Stack>
          </GroupBody>
          <GroupLabel $launch>Paragraph</GroupLabel>
          <Launcher />
        </Group>

        <Group $w={341}>
          <GroupBody $pl={7}>
            <Big $w={60}>
              <BigIcon>
                <Ic w={36} h={38}>
                  <rect x="1" y="1" width="24" height="25" fill="#6aa7e8" stroke="#2b79d0" />
                  <circle cx="22" cy="24" r="13" fill="#fafafa" stroke="#444" strokeWidth="1.4" />
                </Ic>
              </BigIcon>
              <BigLine>Shapes</BigLine>
              <BigLine><Chev /></BigLine>
            </Big>
            <Big $w={52} $ml={2}>
              <BigIcon>
                <Ic w={36} h={42}>
                  <rect x="8" y="13" width="24" height="20" fill="#fbe08a" stroke="#e59a4f" />
                  <rect x="1" y="1" width="14" height="16" fill="#fafafa" stroke="#444" />
                  <rect x="20" y="24" width="14" height="16" fill="#fafafa" stroke="#444" />
                </Ic>
              </BigIcon>
              <BigLine>Arrange</BigLine>
              <BigLine><Chev /></BigLine>
            </Big>
            <Big $w={62} $ml={4}>
              <BigIcon>
                <Ic w={38} h={40}>
                  <rect x="1" y="1" width="34" height="36" rx="3" fill="#fafafa" stroke="#444" strokeWidth="1.3" />
                  <path d="M37 14L25 30" stroke="#444" strokeWidth="2.2" />
                  <path d="M25 28c-4 0-5 3-6 6-1 2-2 2-3 3 5 1 10-1 11-6z" fill="#5aa0df" />
                </Ic>
              </BigIcon>
              <BigLine>Quick</BigLine>
              <BigLine>Styles <Chev /></BigLine>
            </Big>
            <Stack $ml={3}>
              <SmallRow>
                <Ic w={20} h={22}>
                  <path d="M3 10l6-7 6 6-6 6z" stroke="#444" />
                  <path d="M15 3l3 4" stroke="#2b79d0" />
                  <rect x="0" y="16" width="20" height="5" fill="#e0763a" stroke="none" />
                </Ic>
                Shape Fill <Chev />
              </SmallRow>
              <SmallRow>
                <Ic w={20} h={24}>
                  <path d="M1 3h10M1 3v14h18V8" stroke="#666" />
                  <path d="M8 14l1-4 8-8 3 3-8 8z" fill="#fff" stroke="#2b79d0" />
                  <rect x="0" y="18" width="20" height="5" fill="#2b6fc0" stroke="none" />
                </Ic>
                Shape Outline <Chev />
              </SmallRow>
              <SmallRow>
                <Ic w={20} h={20}>
                  <path d="M2 11l8-9h8l-9 10H2z" fill="#f4f4f4" stroke="#444" />
                  <path d="M18 2v6l-8 9H2v-5h7z" fill="#777" stroke="#444" />
                </Ic>
                Shape Effects <Chev />
              </SmallRow>
            </Stack>
          </GroupBody>
          <GroupLabel $launch>Drawing</GroupLabel>
          <Launcher />
        </Group>

        <Group $w={177}>
          <GroupBody $pl={15}>
            <Stack>
              <SmallRow>
                <Ic w={22} h={22}>
                  <circle cx="13" cy="9" r="7" stroke="#444" />
                  <path d="M8 14l-7 7" stroke="#444" strokeWidth="1.4" />
                </Ic>
                Find and Replace
              </SmallRow>
              <SmallRow>
                <Ic w={22} h={22}>
                  <path d="M7 9l3-8 3 8M8 6h4M13 21l3-8 3 8M14 18h4" stroke="#555" />
                  <path d="M9 13a5 5 0 0 0-6 1l-1 3M1 13l1 4 4-1M2 20a5 5 0 0 0 7-1" stroke="#2b79d0" strokeWidth="1.3" />
                </Ic>
                Replace Fonts
              </SmallRow>
              <SmallRow>
                <Ic w={22} h={22}>
                  <path d="M5 1v17l4-4 3 7 3-1-3-7h5z" fill="#fff" stroke="#444" />
                </Ic>
                Select <Chev />
              </SmallRow>
            </Stack>
          </GroupBody>
          <GroupLabel>Editing</GroupLabel>
        </Group>

        <Group $w={99}>
          <GroupBody>
            <Big $w={99}>
              <BigIcon>
                <Ic w={32} h={36}>
                  <path d="M1 2h15l8 8v14a2 2 0 0 1-2 2H3a2 2 0 0 1-2-2z" fill="#fff" stroke="#2b79d0" strokeWidth="1.3" />
                  <path d="M16 2v8h8" stroke="#2b79d0" />
                  <path d="M6 21c4-3 6-9 5-13 0 5 4 9 8 9-4 0-9 1-13 4z" stroke="#2b79d0" />
                  <path d="M19 27l7-7a3 3 0 0 1 4 4l-3 3M24 27l-4 4a3 3 0 0 1-4-4l3-3" stroke="#2b79d0" strokeWidth="1.6" />
                </Ic>
              </BigIcon>
              <BigLine>Crear</BigLine>
              <BigLine>un PDF</BigLine>
            </Big>
          </GroupBody>
          <GroupLabel>Adobe Acrobat</GroupLabel>
        </Group>

        <Group $w={73}>
          <GroupBody>
            <Big $w={73}>
              <BigIcon $h={49}>
                <Ic w={24} h={40}>
                  <rect x="6" y="1" width="12" height="26" rx="6" fill="#73ade8" stroke="#2b79d0" />
                  <path d="M1 20a11 11 0 0 0 22 0M12 31v8" stroke="#444" strokeWidth="1.3" />
                </Ic>
              </BigIcon>
              <BigLine>Dictate</BigLine>
              <BigLine><Chev /></BigLine>
            </Big>
          </GroupBody>
          <GroupLabel>Voice</GroupLabel>
        </Group>

        <Group $w={79}>
          <GroupBody>
            <Big $w={79}>
              <BigIcon>
                <Ic w={36} h={36}>
                  <rect x="1" y="1" width="34" height="34" stroke="#d9673a" strokeWidth="1.8" />
                  <rect x="6" y="6" width="10" height="10" stroke="#d9673a" strokeWidth="1.4" />
                  <rect x="20" y="6" width="10" height="10" stroke="#d9673a" strokeWidth="1.4" />
                  <rect x="6" y="20" width="10" height="10" stroke="#d9673a" strokeWidth="1.4" />
                  <rect x="20" y="20" width="10" height="10" stroke="#d9673a" strokeWidth="1.4" />
                </Ic>
              </BigIcon>
              <BigLine>Add-ins</BigLine>
            </Big>
          </GroupBody>
          <GroupLabel>Add-ins</GroupLabel>
        </Group>

        <Group $w={85}>
          <GroupBody>
            <Big $w={85}>
              <BigIcon>
                <Ic w={38} h={36}>
                  <rect x="4" y="8" width="33" height="26" fill="#f4f4f4" stroke="#555" strokeWidth="1.6" />
                  <path d="M23 8v19M23 15h14M4 27h33" stroke="#555" />
                  <path d="M13 1L4 15h6l-4 11 11-15h-6l5-10z" fill="#f7b64a" stroke="#d9673a" />
                </Ic>
              </BigIcon>
              <BigLine>Designer</BigLine>
            </Big>
          </GroupBody>
        </Group>

        <CollapseBtn>
          <SvgBase width="13" height="8" viewBox="0 0 13 8" fill="none" stroke="#444" strokeWidth="1.2">
            <path d="M1 1l5.500 5.500L12 1" />
          </SvgBase>
        </CollapseBtn>
      </Ribbon>

      <Workspace>
        <Sidebar>
          <ThumbRow>
            <ThumbNo />
            <Thumb $h={11} $r="0 0 5px 5px" />
          </ThumbRow>
          {slides.map((s) => (
            <ThumbRow key={s.no}>
              <ThumbNo $on={s.on}>{s.no}</ThumbNo>
              <Thumb $on={s.on}>
                {s.body}
                <Badge />
              </Thumb>
            </ThumbRow>
          ))}
          <ThumbRow>
            <ThumbNo>9</ThumbNo>
            <Thumb>
              <T9 />
            </Thumb>
          </ThumbRow>
        </Sidebar>
        <VScroll $w={20}>
          <Arrow dir="up" />
          <VThumb $tw={11} $h={423} $mt={234} />
          <Arrow dir="down" />
        </VScroll>
        <Center>
          <CanvasRow>
            <Viewport>
              <ViewportInner>
                <BusinessSlide selected />
              </ViewportInner>
            </Viewport>
            <VScroll $w={19}>
              <Arrow dir="up" />
              <VThumb $tw={10} $h={49} $mt={305} />
              <ArrowStack>
                <Arrow dir="down" />
                <Arrow dir="up" dbl />
                <Arrow dir="down" dbl />
              </ArrowStack>
            </VScroll>
          </CanvasRow>
          <HScroll>
            <Arrow dir="left" />
            <HThumb />
            <Arrow dir="right" />
          </HScroll>
          <HRule />
        </Center>
      </Workspace>

      <StatusBar>
        <StatusText>Slide 5 of 9</StatusText>
        <StatusText $ml={40}>English (United States)</StatusText>
        <Cell $ml={22}>
          <Ic w={20} h={22}>
            <circle cx="10" cy="4" r="2.5" />
            <path d="M2 5l6 4v5l-4 7M18 5l-6 4v3M11 15l7 6M18 15l-7 6" />
          </Ic>
        </Cell>
        <StatusText $ml={3} $b={600}>Accessibility: Investigate</StatusText>
        <Cell $ml={945}>
          <Ic w={20} h={22}>
            <path d="M0 9h20M0 14h20M0 20h20" stroke="#333" strokeWidth="1.3" />
            <path d="M7 5l3-3 3 3" stroke="#333" strokeWidth="1.6" />
          </Ic>
        </Cell>
        <StatusText $ml={2}>Notes</StatusText>
        <ViewBtn $on $ml={25} $w={50}>
          <Ic w={18} h={18}>
            <rect x="1" y="1" width="16" height="16" stroke="#444" strokeWidth="1.4" />
            <path d="M5 1v16" stroke="#444" />
            <rect x="8" y="5" width="6" height="5" stroke="#444" />
          </Ic>
        </ViewBtn>
        <ViewBtn $ml={14}>
          <Ic w={18} h={18}>
            <rect x="1" y="1" width="6.500" height="6.500" stroke="#444" />
            <rect x="10.500" y="1" width="6.500" height="6.500" stroke="#444" />
            <rect x="1" y="10.500" width="6.500" height="6.500" stroke="#444" />
            <rect x="10.500" y="10.500" width="6.500" height="6.500" stroke="#444" />
          </Ic>
        </ViewBtn>
        <ViewBtn $ml={33}>
          <Ic w={18} h={18}>
            <path d="M9 3C7 1 4 1 1 2v13c3-1 6-1 8 1 2-2 5-2 8-1V2c-3-1-6-1-8 1zM9 3v13M3 5h4M3 8h4M3 11h4M11 5h4M11 8h4M11 11h4" stroke="#444" />
          </Ic>
        </ViewBtn>
        <ViewBtn $ml={33}>
          <Ic w={18} h={20}>
            <rect x="2" y="2" width="14" height="9" stroke="#444" />
            <path d="M6 6h6M9 11v7M4 18h10" stroke="#444" />
          </Ic>
        </ViewBtn>
        <Cell $ml={22}>
          <Ic w={11} h={11}><path d="M0 5.500h10" stroke="#333" /></Ic>
        </Cell>
        <ZoomTrack>
          <ZoomThumb />
          <ZoomTick />
        </ZoomTrack>
        <Cell $ml={6}>
          <Ic w={11} h={11}><path d="M0 5.500h10M5 .5v10" stroke="#333" /></Ic>
        </Cell>
        <StatusText $ml={15}>90%</StatusText>
        <Cell $ml={17}>
          <Ic w={18} h={22}>
            <rect x="5" y="6" width="8" height="10" stroke="#333" />
            <path d="M6 3l3-2 3 2M6 19l3 2 3-2M3 8l-2 3 2 3M15 8l2 3-2 3" stroke="#333" />
          </Ic>
        </Cell>
      </StatusBar>
    </Page>
  );
}
